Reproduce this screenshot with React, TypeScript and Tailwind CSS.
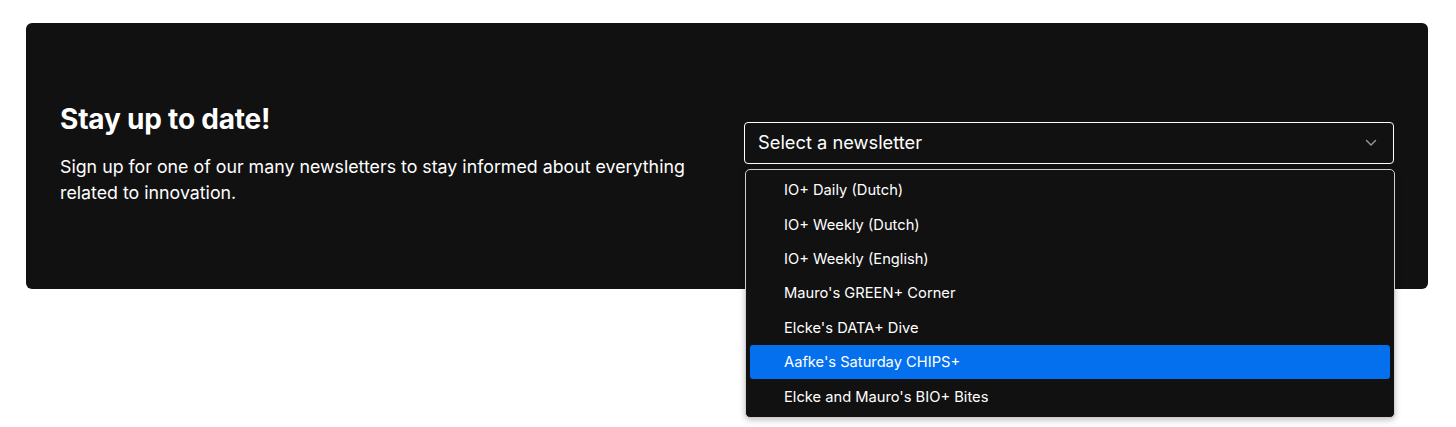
import React from "react";

const items = [
  "IO+ Daily (Dutch)",
  "IO+ Weekly (Dutch)",
  "IO+ Weekly (English)",
  "Mauro's GREEN+ Corner",
  "Elcke's DATA+ Dive",
  "Aafke's Saturday CHIPS+",
  "Elcke and Mauro's BIO+ Bites",
];

export default function App() {
  return (
    <div
      className="relative w-[1456px] h-[427px] bg-white"
      style={{ fontFamily: "Inter, 'Noto Sans', sans-serif" }}
    >
      <div className="pt-[23px] pl-[26px]">
        <div className="w-[1402px] h-[266px] rounded-[6px] bg-[#111111] px-[34px] pt-[77px] grid grid-cols-2 gap-[34px] items-start">
          <div className="text-white">
            <h2 className="mt-[2px] text-[28px] leading-[34px] font-bold tracking-[-0.2px]">Stay up to date!</h2>
            <p className="mt-[18px] text-[17.8px] leading-[26px]">
              Sign up for one of our many newsletters to stay informed about everything related to innovation.
            </p>
          </div>
          <div className="pt-[22px]">
            <div className="h-[42px] rounded-[4px] border border-white flex items-center justify-between pl-[13px] pr-[16px] text-white">
              <span className="text-[18.3px]">Select a newsletter</span>
              <svg width="12" height="8" viewBox="0 0 12 8" fill="none">
                <path d="M1.5 1.5 L6 6 L10.5 1.5" stroke="#9a9a9a" strokeWidth="1.4" strokeLinecap="round" strokeLinejoin="round" />
              </svg>
            </div>
          </div>
        </div>
      </div>

      <div className="absolute left-[745px] top-[169px] w-[650px] h-[249px] rounded-[5px] bg-[#111111] border border-[#cfcfcf] shadow-[0_2px_6px_rgba(0,0,0,0.25)] py-[3px] px-[4px] flex flex-col">
        {items.map((t, i) => (
          <div
            key={t}
            className={
              i === 5
                ? "h-[34.4px] flex items-center pl-[34px] rounded-[3px] bg-[#0570EE] text-white text-[14.7px]"
                : "h-[34.4px] flex items-center pl-[34px] text-white text-[14.7px]"
            }
          >
            {t}
          </div>
        ))}
      </div>
    </div>
  );
}
